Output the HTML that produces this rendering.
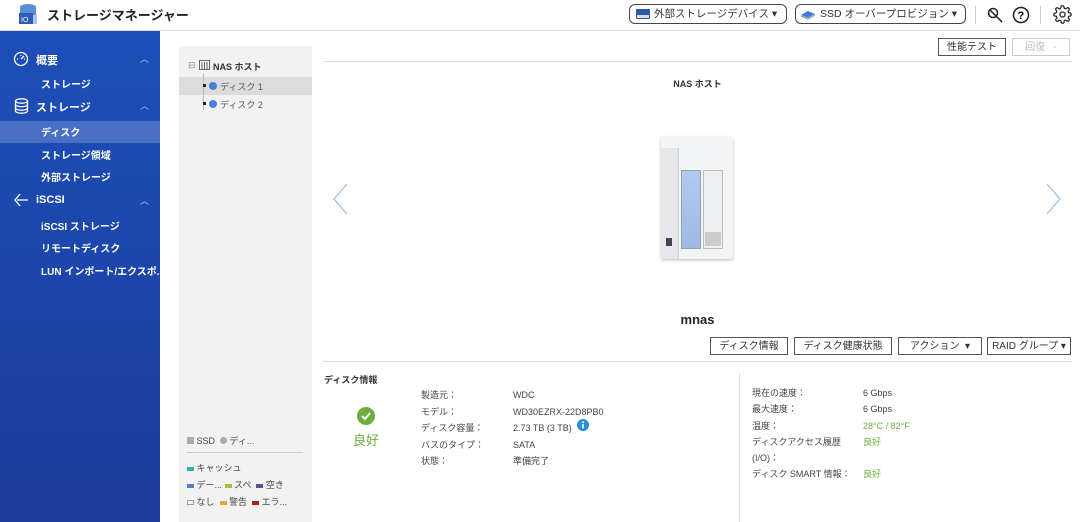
<!DOCTYPE html>
<html><head><meta charset="utf-8"><style>
*{box-sizing:border-box;margin:0;padding:0}
body{width:1080px;height:522px;overflow:hidden;background:#fff;font-family:"Liberation Sans","Noto Sans CJK JP",sans-serif;font-size:10px;color:#333;position:relative}
.a{position:absolute;white-space:nowrap}
.hdr{left:0;top:0;width:1080px;height:31px;border-bottom:1px solid #ddd}
.side{left:0;top:31px;width:160px;height:491px;background:linear-gradient(#1d4fb8,#1b3c9e);color:#fff}
.side .i{position:absolute;left:41px;font-size:10px;font-weight:bold}
.side .h{position:absolute;left:36px;font-size:11px;font-weight:bold}
.side .c{position:absolute;left:140px;font-size:9px;color:#b8c6ee}
.btn{position:absolute;border:1px solid #555;background:#fff;font-size:10px;text-align:center;line-height:14px;padding-top:2px;height:18px}
.pill{position:absolute;border:1px solid #444;border-radius:6px;height:20px;top:4px;font-size:10.5px;line-height:18px;padding-left:24px}
.lbl{position:absolute;font-size:9px;color:#444}
</style></head><body>
<div class="a hdr"></div>
<svg class="a" style="left:17px;top:3px" width="22" height="22" viewBox="0 0 22 22"><ellipse cx="11" cy="4" rx="8" ry="3" fill="#5b8fd6"/><rect x="3" y="4" width="16" height="8" fill="#5b8fd6"/><rect x="2" y="10" width="14" height="11" fill="#2c5eb5"/><text x="4" y="19" font-size="7" fill="#fff" font-family="Liberation Sans">IO</text><rect x="16" y="12" width="4" height="9" fill="#a8c4ea"/></svg>
<div class="a" style="left:47px;top:5px;font-size:13px;font-weight:bold;color:#222">ストレージマネージャー</div>
<div class="pill" style="left:629px;width:158px">外部ストレージデバイス ▾</div>
<svg class="a" style="left:636px;top:9px" width="14" height="10"><rect width="14" height="10" rx="1" fill="#2a5aa8"/><rect x="1" y="6" width="12" height="3" fill="#ddd"/></svg>
<div class="pill" style="left:795px;width:171px">SSD オーバープロビジョン ▾</div>
<svg class="a" style="left:800px;top:8px" width="16" height="12"><path d="M1 7 L8 3 L15 6 L8 10Z" fill="#3f7ed8"/><path d="M1 8 L8 11 L15 7" stroke="#888" fill="none"/></svg>
<div class="a" style="left:975px;top:6px;width:1px;height:18px;background:#ccc"></div>
<svg class="a" style="left:986px;top:6px" width="18" height="18" viewBox="0 0 18 18" fill="none" stroke="#222" stroke-width="1.5"><circle cx="7" cy="7" r="4.5"/><path d="M10 10l6 6M4 4l6 6"/></svg>
<svg class="a" style="left:1012px;top:6px" width="18" height="18" viewBox="0 0 18 18"><circle cx="9" cy="9" r="7.5" fill="none" stroke="#222" stroke-width="1.5"/><text x="5.5" y="13" font-size="11" font-weight="bold" font-family="Liberation Sans">?</text></svg>
<div class="a" style="left:1040px;top:6px;width:1px;height:18px;background:#ccc"></div>
<svg class="a" style="left:1053px;top:5px" width="19" height="19" viewBox="0 0 24 24" fill="none" stroke="#222" stroke-width="1.6"><circle cx="12" cy="12" r="3.2"/><path d="M19.4 15a1.7 1.7 0 0 0 .3 1.8l.1.1a2 2 0 1 1-2.8 2.8l-.1-.1a1.7 1.7 0 0 0-1.8-.3 1.7 1.7 0 0 0-1 1.5V21a2 2 0 1 1-4 0v-.1a1.7 1.7 0 0 0-1.1-1.5 1.7 1.7 0 0 0-1.8.3l-.1.1a2 2 0 1 1-2.8-2.8l.1-.1a1.7 1.7 0 0 0 .3-1.8 1.7 1.7 0 0 0-1.5-1H3a2 2 0 1 1 0-4h.1a1.7 1.7 0 0 0 1.5-1.1 1.7 1.7 0 0 0-.3-1.8l-.1-.1a2 2 0 1 1 2.8-2.8l.1.1a1.7 1.7 0 0 0 1.8.3H9a1.7 1.7 0 0 0 1-1.5V3a2 2 0 1 1 4 0v.1a1.7 1.7 0 0 0 1 1.5 1.7 1.7 0 0 0 1.8-.3l.1-.1a2 2 0 1 1 2.8 2.8l-.1.1a1.7 1.7 0 0 0-.3 1.8V9a1.7 1.7 0 0 0 1.5 1H21a2 2 0 1 1 0 4h-.1a1.7 1.7 0 0 0-1.5 1z"/></svg>

<div class="a side">
<svg style="position:absolute;left:13px;top:20px" width="16" height="16" viewBox="0 0 16 16" fill="none" stroke="#fff" stroke-width="1.3"><circle cx="8" cy="8" r="6.5"/><path d="M8 8l3-3M4 8h1M11 8h1M8 4v1"/></svg>
<div class="h" style="top:21px">概要</div><div class="c" style="top:21px">︿</div>
<div class="i" style="top:45px">ストレージ</div>
<svg style="position:absolute;left:14px;top:67px" width="15" height="16" viewBox="0 0 15 16" fill="none" stroke="#fff" stroke-width="1.3"><ellipse cx="7.5" cy="3" rx="6" ry="2.2"/><path d="M1.5 3v10c0 1.2 2.7 2.2 6 2.2s6-1 6-2.2V3M1.5 6.5c0 1.2 2.7 2.2 6 2.2s6-1 6-2.2M1.5 10c0 1.2 2.7 2.2 6 2.2s6-1 6-2.2"/></svg>
<div class="h" style="top:68px">ストレージ</div><div class="c" style="top:68px">︿</div>
<div style="position:absolute;left:0;top:90px;width:160px;height:22px;background:#4a6fc4"></div>
<div class="i" style="top:93px">ディスク</div>
<div class="i" style="top:116px">ストレージ領域</div>
<div class="i" style="top:138px">外部ストレージ</div>
<svg style="position:absolute;left:14px;top:162px" width="16" height="14" viewBox="0 0 16 14" fill="none" stroke="#fff" stroke-width="1.3"><path d="M6 1L1 7l5 6M3 7h11"/></svg>
<div class="h" style="top:163px">iSCSI</div><div class="c" style="top:163px">︿</div>
<div class="i" style="top:187px">iSCSI ストレージ</div>
<div class="i" style="top:209px">リモートディスク</div>
<div class="i" style="top:232px">LUN インポート/エクスポ...</div>
</div>

<div class="a" style="left:179px;top:46px;width:133px;height:476px;background:#f2f2f2"></div>
<div class="a" style="left:188px;top:60px;font-size:9px;color:#888">⊟</div>
<svg class="a" style="left:199px;top:60px" width="11" height="10"><rect x=".5" y=".5" width="10" height="9" fill="none" stroke="#666"/><path d="M3 2v7M5.5 2v7M8 2v7" stroke="#666"/></svg>
<div class="a" style="left:213px;top:60px;font-size:9px;font-weight:bold">NAS ホスト</div>
<div class="a" style="left:179px;top:77px;width:133px;height:18px;background:#dcdcdc"></div>
<div class="a" style="left:203px;top:74px;width:1px;height:36px;background:#bbb"></div>
<div class="a" style="left:203px;top:84px;width:3px;height:3px;background:#222"></div>
<div class="a" style="left:209px;top:82px;width:8px;height:8px;border-radius:50%;background:#4a80dd"></div>
<div class="a" style="left:220px;top:80px;font-size:9px;color:#555">ディスク 1</div>
<div class="a" style="left:203px;top:102px;width:3px;height:3px;background:#222"></div>
<div class="a" style="left:209px;top:100px;width:8px;height:8px;border-radius:50%;background:#4a80dd"></div>
<div class="a" style="left:220px;top:98px;font-size:9px;color:#555">ディスク 2</div>
<div class="a" style="left:187px;top:434px;font-size:9px;color:#444"><span style="display:inline-block;width:7px;height:7px;background:#aaa"></span> SSD &nbsp;<span style="display:inline-block;width:7px;height:7px;border-radius:50%;background:#aaa"></span> ディ...</div>
<div class="a" style="left:187px;top:452px;width:116px;height:1px;background:#ccc"></div>
<div class="a" style="left:187px;top:461px;font-size:9px;color:#444"><span style="display:inline-block;width:7px;height:4px;background:#2bb3a8;vertical-align:middle"></span> キャッシュ</div>
<div class="a" style="left:187px;top:478px;font-size:9px;color:#444"><span style="display:inline-block;width:7px;height:4px;background:#5a7fc0;vertical-align:middle"></span> デー... <span style="display:inline-block;width:7px;height:4px;background:#9ac43a;vertical-align:middle"></span> スペ &nbsp;<span style="display:inline-block;width:7px;height:4px;background:#6a4c8c;vertical-align:middle"></span> 空き</div>
<div class="a" style="left:187px;top:495px;font-size:9px;color:#444"><span style="display:inline-block;width:7px;height:5px;border:1px solid #999;vertical-align:middle"></span> なし &nbsp;<span style="display:inline-block;width:7px;height:4px;background:#f0a030;vertical-align:middle"></span> 警告 &nbsp;<span style="display:inline-block;width:7px;height:4px;background:#b02020;vertical-align:middle"></span> エラ...</div>

<div class="btn" style="left:938px;top:38px;width:68px">性能テスト</div>
<div class="btn" style="left:1012px;top:38px;width:58px;border-color:#ccc;color:#bbb">回復 &nbsp;&nbsp;-</div>
<div class="a" style="left:323px;top:61px;width:749px;height:1px;background:#ddd"></div>
<div class="a" style="left:323px;top:77px;width:749px;text-align:center;font-size:9px;font-weight:bold">NAS ホスト</div>
<svg class="a" style="left:332px;top:183px" width="16" height="32"><path d="M15 1L2 16l13 15" stroke="#9cc0ea" fill="none" stroke-width="1.3"/></svg>
<svg class="a" style="left:1046px;top:183px" width="16" height="32"><path d="M1 1l13 15L1 31" stroke="#9cc0ea" fill="none" stroke-width="1.3"/></svg>
<div class="a" style="left:661px;top:137px;width:72px;height:122px;background:#f3f4f6;border-radius:3px;box-shadow:0 1px 3px #bbb"></div>
<div class="a" style="left:661px;top:148px;width:18px;height:111px;background:#e6e7ea;border-right:1px solid #d0d0d0"></div>
<div class="a" style="left:666px;top:238px;width:6px;height:8px;background:#445"></div>
<div class="a" style="left:681px;top:170px;width:20px;height:79px;background:linear-gradient(#b3c9ee,#9fb8e6);border:1px solid #8aa"></div>
<div class="a" style="left:703px;top:170px;width:20px;height:79px;background:#eeeff1;border:1px solid #bbb"></div>
<div class="a" style="left:705px;top:232px;width:16px;height:14px;background:#ccc"></div>
<div class="a" style="left:323px;top:312px;width:749px;text-align:center;font-size:13px;font-weight:bold;color:#222">mnas</div>
<div class="btn" style="left:710px;top:337px;width:78px">ディスク情報</div>
<div class="btn" style="left:794px;top:337px;width:98px">ディスク健康状態</div>
<div class="btn" style="left:898px;top:337px;width:84px">アクション &nbsp;▾</div>
<div class="btn" style="left:987px;top:337px;width:84px">RAID グループ ▾</div>
<div class="a" style="left:323px;top:361px;width:749px;height:1px;background:#ddd"></div>
<div class="a" style="left:324px;top:373px;font-size:9px;font-weight:bold">ディスク情報</div>
<svg class="a" style="left:357px;top:407px" width="18" height="18"><circle cx="9" cy="9" r="9" fill="#6cae3e"/><path d="M5 9l3 3 5-6" stroke="#fff" stroke-width="2" fill="none"/></svg>
<div class="a" style="left:353px;top:430px;font-size:13px;color:#6cae3e">良好</div>
<div class="lbl" style="left:421px;top:387px;line-height:16.5px">製造元：<br>モデル：<br>ディスク容量：<br>バスのタイプ：<br>状態：</div>
<div class="lbl" style="left:513px;top:387px;line-height:16.5px">WDC<br>WD30EZRX-22D8PB0<br>2.73 TB (3 TB)<br>SATA<br>準備完了</div>
<svg class="a" style="left:577px;top:419px" width="12" height="12"><circle cx="6" cy="6" r="6" fill="#2a8ce0"/><rect x="5.2" y="5" width="1.6" height="4.5" fill="#fff"/><circle cx="6" cy="3.3" r="1" fill="#fff"/></svg>
<div class="a" style="left:739px;top:373px;width:1px;height:149px;background:#ddd"></div>
<div class="lbl" style="left:752px;top:385px;line-height:16.3px">現在の速度：<br>最大速度：<br>温度：<br>ディスクアクセス履歴<br>(I/O)：<br>ディスク SMART 情報：</div>
<div class="lbl" style="left:863px;top:385px;line-height:16.3px">6 Gbps<br>6 Gbps<br><span style="color:#6cae3e">28°C / 82°F</span><br><span style="color:#6cae3e">良好</span><br>&nbsp;<br><span style="color:#6cae3e">良好</span></div>
</body></html>
